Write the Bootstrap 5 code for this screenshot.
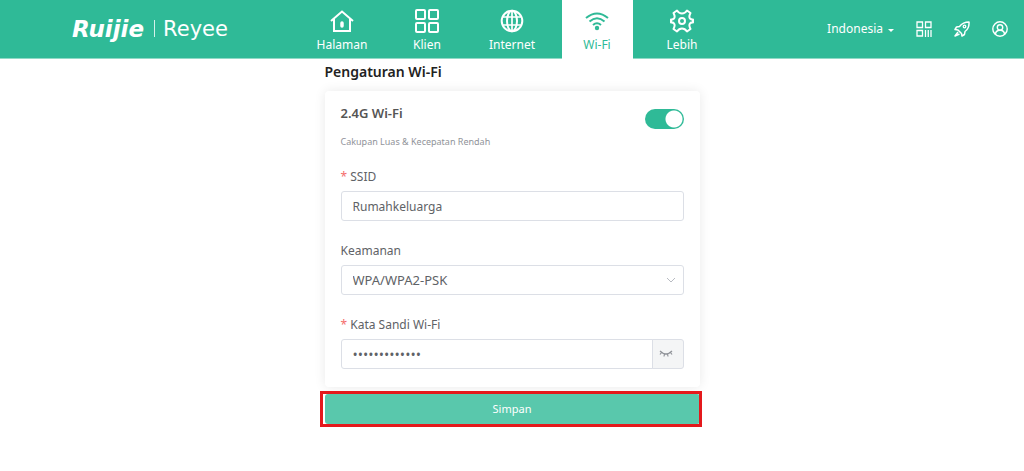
<!DOCTYPE html>
<html lang="id">
<head>
<meta charset="utf-8">
<meta name="viewport" content="width=device-width, initial-scale=1">
<title>Pengaturan Wi-Fi</title>
<link href="https://cdn.jsdelivr.net/npm/bootstrap@5.3.0/dist/css/bootstrap.min.css" rel="stylesheet">
<style>
  :root { --brand: #2fba97; --line: #dcdfe6; --ink: #606266; }
  body { font-family: "Noto Sans", "Open Sans", sans-serif; font-size: 12px; line-height: 18px; color: var(--ink); background: #fff; }
  svg { display: block; fill: none; stroke: currentColor; stroke-width: 2; }
  .topbar { display: grid; grid-template-columns: 1fr auto 1fr; background: var(--brand); color: #fff; border-bottom: 1px solid #8fdac6; }
  .brand-logo { color: #fff; line-height: 24px; padding-left: 72px; }
  .logo-main { font: italic bold 23px/24px "DejaVu Sans", sans-serif; }
  .logo-rule { width: 1px; height: 17px; background: #fff; opacity: .8; margin: 0 8px 0 10px; }
  .logo-sub { font: 21px/24px "DejaVu Sans", sans-serif; }
  .tabs { gap: 14px; }
  .tab-item { width: 71px; height: 58px; padding-top: 9px; gap: 2px; color: #fff; line-height: 20px; margin-bottom: -1px; }
  .tab-item.active { background: #fff; color: var(--brand); height: 59px; }
  .tools { gap: 22px; padding-right: 16px; }
  .tools button { border: 0; padding: 0; background: none; color: #fff; }
  .lang::after { margin-left: 5px; vertical-align: 1px; border-width: 3px 3px 0; }
  .panel-col { max-width: 375px; padding-bottom: 32px; }
  .page-title { font-size: 14px; line-height: 20px; font-weight: 600; color: #222; margin: 3px 0 9px; }
  .panel { border: 0; border-radius: 4px; padding: 12px 16px 18px; box-shadow: 0 0 12px rgba(0, 0, 0, .09); }
  .panel-title { font-size: 13px; line-height: 20px; font-weight: 600; margin: 0; color: #555; }
  .hint { font-size: 9px; line-height: 14px; color: #909399; margin: 12px 0 19px; }
  .form-switch .form-check-input.wifi-switch { width: 39px; height: 20px; margin: 6px 0 0; border: 0; background-color: #c0c4cc; background-size: 20px; background-image: radial-gradient(circle, #fff 8px, transparent 9px); }
  .form-switch .form-check-input.wifi-switch:checked { background-color: var(--brand); }
  .field { margin-bottom: 21px; }
  .field:last-child { margin-bottom: 0; }
  .field label { display: block; line-height: 18px; margin-bottom: 5px; }
  .req { color: #f56c6c; }
  .box, .box:focus { height: 30px; font-size: 12px; line-height: 18px; padding: 5px 11px; border: 1px solid var(--line); border-radius: 3px; color: var(--ink); box-shadow: none; }
  #pwd { font-family: "Open Sans", sans-serif; font-size: 14px; }
  select.box, select.box:focus { font-size: 13px; background-size: 10px; background-position: right 7px center; background-image: url("data:image/svg+xml,%3Csvg xmlns='http://www.w3.org/2000/svg' viewBox='0 0 10 10'%3E%3Cpath d='M1 3l4 4 4-4' fill='none' stroke='%23b8bbc2'/%3E%3C/svg%3E"); }
  .eye { width: 32px; padding: 0 0 0 6px; border: 1px solid var(--line); border-radius: 3px; background: #f4f5f6; color: #909399; }
  .save-wrap { position: relative; margin-top: 7px; }
  .save-wrap::before { content: ""; position: absolute; inset: -3px -2px -3px -5px; border: 3px solid #e4191c; pointer-events: none; z-index: 1; }
  .save { height: 30px; padding: 0; font-size: 11px; line-height: 30px; color: #fff; border: 0; border-radius: 3px; background: #59c8ac; }
</style>
</head>
<body>
<header class="topbar align-items-center">
  <div>
    <a href="#" class="brand-logo d-inline-flex align-items-center text-decoration-none">
      <span class="logo-main">Ruijie</span><span class="logo-rule"></span><span class="logo-sub">Reyee</span>
    </a>
  </div>
  <nav class="tabs d-flex">
    <a href="#" class="tab-item d-flex flex-column align-items-center text-decoration-none">
      <svg width="24" height="24" viewBox="0 0 24 24"><path d="M1 12L12 2.500l11 9.500M4 10v12h16V10"/><path d="M12 14v3" stroke-width="3.500" stroke-linecap="round"/></svg>Halaman</a>
    <a href="#" class="tab-item d-flex flex-column align-items-center text-decoration-none">
      <svg width="24" height="24" viewBox="0 0 24 24"><rect x="1" y="1" width="9" height="9" rx="1"/><rect x="14" y="1" width="9" height="9" rx="1"/><rect x="1" y="14" width="9" height="9" rx="1"/><rect x="14" y="14" width="9" height="9" rx="1"/></svg>Klien</a>
    <a href="#" class="tab-item d-flex flex-column align-items-center text-decoration-none">
      <svg width="24" height="24" viewBox="0 0 24 24"><circle cx="12" cy="12" r="10.3"/><ellipse cx="12" cy="12" rx="5" ry="10.3"/><path d="M12 2v20M3 8h18M3 16h18" stroke-width="1.700"/></svg>Internet</a>
    <a href="#" class="tab-item active d-flex flex-column align-items-center text-decoration-none" aria-current="page">
      <svg width="24" height="24" viewBox="0 0 24 24"><path d="M1 9q11-9 22 0M4.500 12.500q7.500-6.500 15 0M8 16q4-3.500 8 0"/><circle cx="12" cy="19" r="2.200" fill="currentColor" stroke="none"/></svg>Wi-Fi</a>
    <a href="#" class="tab-item d-flex flex-column align-items-center text-decoration-none">
      <svg width="24" height="24" viewBox="0 0 24 24" stroke-linejoin="round"><path d="M7 1.500Q9 4.500 12 4.500T17 1.500L20.500 4Q18.500 8 20 9.500T23 10.500v3Q21.500 13 20 14.500T20.500 20L17 22.500Q15 19.500 12 19.500T7 22.500L3.500 20Q5.500 16 4 14.500T1 13.500v-3Q2.500 11 4 9.500T3.500 4z"/><circle cx="12" cy="12" r="3"/></svg>Lebih</a>
  </nav>
  <div class="tools d-flex align-items-center justify-content-end">
    <button type="button" class="lang dropdown-toggle">Indonesia</button>
    <button type="button" aria-label="Kode QR"><svg width="16" height="16" viewBox="0 0 16 16"><path stroke-width="1.300" d="M1 1h5.500v5.500H1zM9.500 1H15v5.500H9.500zM1 9.500h5.500V15H1zM9.500 9v7M12.250 9v7M15 9v7"/></svg></button>
    <button type="button" aria-label="Optimasi"><svg width="16" height="16" viewBox="0 0 16 16" stroke-linejoin="round"><path stroke-width="1.500" d="M15 1Q9 1 5.500 5.500L2.500 6 1 8.500l3 .5 3.500 3.500.5 2.500 2.500-1.500.500-3Q15.500 7 15 1zM4 11l-3 4 4.500-2"/><circle cx="10.500" cy="5.500" r="1.300" stroke-width="1.300"/></svg></button>
    <button type="button" aria-label="Akun"><svg width="16" height="16" viewBox="0 0 16 16"><g stroke-width="1.400"><circle cx="8" cy="8" r="7.200"/><circle cx="8" cy="6.500" r="2.700"/><path d="M3.500 13.500q0-4.300 4.500-4.300t4.500 4.300"/></g></svg></button>
  </div>
</header>

<main class="panel-col mx-auto">
  <h1 class="page-title">Pengaturan Wi-Fi</h1>
  <form>
    <section class="card panel">
      <div class="d-flex justify-content-between align-items-start">
        <div>
          <h2 class="panel-title">2.4G Wi-Fi</h2>
          <p class="hint">Cakupan Luas &amp; Kecepatan Rendah</p>
        </div>
        <div class="form-switch p-0"><input class="form-check-input wifi-switch" type="checkbox" role="switch" aria-label="2.4G Wi-Fi" checked></div>
      </div>
      <div class="field">
        <label for="ssid"><span class="req">*</span> SSID</label>
        <input id="ssid" class="form-control box" type="text" value="Rumahkeluarga">
      </div>
      <div class="field">
        <label for="sec">Keamanan</label>
        <select id="sec" class="form-select box"><option>WPA/WPA2-PSK</option></select>
      </div>
      <div class="field">
        <label for="pwd"><span class="req">*</span> Kata Sandi Wi-Fi</label>
        <div class="input-group">
          <input id="pwd" class="form-control box" type="password" value="rumahkeluarga">
          <button type="button" class="eye" aria-label="Tampilkan kata sandi"><svg width="14" height="10" viewBox="0 0 14 10"><path stroke-width="1.200" d="M1 2q6 6 12 0M2.500 3.500L1 5.500M5.500 5L5 7.500M8.500 5L9 7.500M11.500 3.500L13 5.500"/></svg></button>
        </div>
      </div>
    </section>
    <div class="save-wrap"><button type="submit" class="btn save w-100">Simpan</button></div>
  </form>
</main>
<script src="https://cdn.jsdelivr.net/npm/bootstrap@5.3.0/dist/js/bootstrap.bundle.min.js"></script>
</body>
</html>
